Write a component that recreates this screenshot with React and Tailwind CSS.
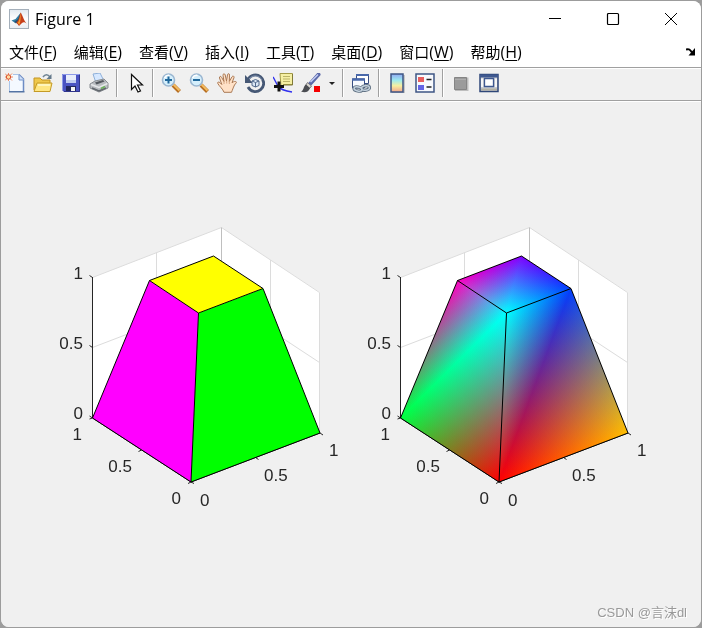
import React from "react";

const V = {
  1: [148, 268],
  2: [277, 219],
  4: [49.5, 204],
  5: [155.5, 99],
  6: [220, 74.5],
  7: [170.5, 42],
  8: [106.5, 66.5],
};

// hsv colormap with eight entries, one per vertex
const HSV = {
  1: "#ff0000",
  2: "#ffbf00",
  4: "#00ff40",
  5: "#00ffff",
  6: "#0040ff",
  7: "#8000ff",
  8: "#ff00bf",
};

const points = (ids) => ids.map((i) => V[i].join(",")).join(" ");

// foot of the perpendicular from p on the line a-b
function foot(p, a, b) {
  const dx = b[0] - a[0];
  const dy = b[1] - a[1];
  const t = ((p[0] - a[0]) * dx + (p[1] - a[1]) * dy) / (dx * dx + dy * dy);
  return [a[0] + t * dx, a[1] + t * dy];
}

// Linear colour interpolation across a triangle: three ramps added together
function ShadedTriangle({ ids }) {
  return (
    <g className="isolate">
      {ids.map((id, n) => {
        const a = V[ids[(n + 1) % 3]];
        const b = V[ids[(n + 2) % 3]];
        const f = foot(V[id], a, b);
        const gid = `ramp-${ids.join("-")}-${id}`;
        return (
          <g key={id} className="mix-blend-plus-lighter">
            <linearGradient id={gid} gradientUnits="userSpaceOnUse" x1={V[id][0]} y1={V[id][1]} x2={f[0]} y2={f[1]}>
              <stop offset="0" stopColor={HSV[id]} />
              <stop offset="1" stopColor="#000000" />
            </linearGradient>
            <polygon points={points(ids)} fill={`url(#${gid})`} shapeRendering="crispEdges" />
          </g>
        );
      })}
    </g>
  );
}

function FlatFaces() {
  return (
    <>
      <polygon points={points([1, 4, 8, 5])} fill="#ff00ff" />
      <polygon points={points([1, 2, 6, 5])} fill="#00ff00" />
      <polygon points={points([5, 6, 7, 8])} fill="#ffff00" />
    </>
  );
}

function ShadedFaces() {
  return (
    <>
      <ShadedTriangle ids={[1, 4, 5]} />
      <ShadedTriangle ids={[4, 5, 8]} />
      <ShadedTriangle ids={[1, 2, 6]} />
      <ShadedTriangle ids={[1, 6, 5]} />
      <ShadedTriangle ids={[5, 6, 7]} />
      <ShadedTriangle ids={[5, 7, 8]} />
    </>
  );
}

function Axes({ label, children }) {
  return (
    <svg role="img" aria-label={label} width="308" height="300" viewBox="0 0 308 300" className="shrink-0">
      <polygon points="49.5,63.5 178.5,13.5 178.5,154 49.5,204" fill="#fff" />
      <polygon points="178.5,13.5 277,78.5 277,219 178.5,154" fill="#fff" />
      <g stroke="#dcdcdc" fill="none">
        <path d="M49.5 63.5 178.5 13.5 276.5 78.5V219" />
        <path d="M113.5 38.5V179M227.5 46V186" />
        <path d="M49.5 133.5 178.5 84 276.5 148.5" />
        <path d="M178.5 13.5V154" stroke="#bfbfbf" />
      </g>
      <g stroke="#262626" fill="none">
        <path d="M49.5 63V204L148 268 277 219" />
        <path d="M49.5 63.5l-3-2M49.5 133.5l-3-2M49.5 204l-3-2" />
        <path d="M49.5 204l-3 1M98.5 236l-3 1.500M148 268l-3 1.500M148 268l3 1.500M212.500 243.500l3 2M277 219l3 2" />
      </g>
      {children}
      <g stroke="#000" strokeWidth="1" fill="none" strokeLinejoin="round">
        <path d={`M${V[4]}L${V[8]} ${V[5]} ${V[1]}ZM${V[1]}L${V[2]} ${V[6]} ${V[5]}M${V[6]}L${V[7]} ${V[8]}`} />
      </g>
      <g className="font-['Liberation_Sans',Arial,sans-serif] text-[17px]" fill="#262626">
        <g textAnchor="end">
          <text x="40" y="65">1</text>
          <text x="40" y="135">0.5</text>
          <text x="40" y="205">0</text>
          <text x="39" y="226">1</text>
          <text x="89" y="258">0.5</text>
          <text x="138" y="290">0</text>
        </g>
        <text x="157" y="292">0</text>
        <text x="221" y="267">0.5</text>
        <text x="286" y="242">1</text>
      </g>
    </svg>
  );
}

function Icon({ children }) {
  return (
    <svg width="20" height="20" viewBox="0 0 20 20" fill="none" aria-hidden="true">
      {children}
    </svg>
  );
}

const NewIcon = () => (
  <Icon>
    <path d="M4 2h10l5 5v12H4z" fill="#f4f9ff" />
    <path d="M4.500 8v10.500M8 1.500h6" stroke="#a9c4e8" />
    <path d="M14 1.500 18.500 6v12" stroke="#6d8cc4" strokeWidth="1.500" />
    <path d="M4 18.750h15.500" stroke="#5474a4" strokeWidth="1.500" />
    <path d="M14 2v5h5" fill="#cfe0f8" stroke="#7595cc" />
    <path d="M0 0.500l7 7M7 0.500l-7 7M3.500 0v8M0 4h8" stroke="#ef8a63" />
    <circle cx="3.500" cy="4" r="2.200" fill="#ffd9a0" stroke="#d9522c" />
  </Icon>
);

const OpenIcon = () => (
  <Icon>
    <path d="M1 17V5h6l2 2h8v4" fill="#efc84b" stroke="#c39422" />
    <path d="M1 18.500 4 10h15l-2 8.500z" fill="#ffe783" stroke="#c49a25" />
    <path d="M5 12h12" stroke="#fff6bd" strokeWidth="2" />
    <path d="M10 4c2-3 5-3 7 0" stroke="#6f8494" strokeWidth="1.500" />
    <path d="M18.500 1v5h-5z" fill="#64798b" />
  </Icon>
);

const SaveIcon = () => (
  <Icon>
    <path d="M1 1h18v18H3l-2-2z" fill="#4a53c2" />
    <path d="M1.500 17V1.500h17" stroke="#8d9ae8" />
    <path d="M18.500 2v16.500H3" stroke="#30358c" />
    <path d="M5 2h10v8H5z" fill="#e8edfb" />
    <path d="M5 7h10v3H5z" fill="#c2cdf0" />
    <path d="M5 13h10v5H5z" fill="#23275e" />
    <path d="M10 14h4v4h-4z" fill="#f5f5f5" />
  </Icon>
);

const PrintIcon = () => (
  <Icon>
    <path d="M4 1l7-1 4 8-8 2z" fill="#d6e8ff" stroke="#8fb0d9" />
    <path d="M1 11l5-3 9-2 4 4v5l-9 4-9-4z" fill="#b9bcc0" stroke="#888c91" />
    <path d="M2 11.500l8 3 8.500-4" stroke="#e6e8ea" strokeWidth="1.500" />
    <path d="M6 9.500l8-2.500 1.500 1.500-8 3z" fill="#53585e" />
    <path d="M3 15l7 3 7-3" stroke="#63686e" strokeWidth="1.500" />
    <path d="M12 15.500l4-2" stroke="#6db35b" strokeWidth="1.500" />
  </Icon>
);

const PointerIcon = () => (
  <Icon>
    <path d="M6.500 1.500v15l3.500-3.500 3 6 2.500-1-3-6h5z" fill="#fff" stroke="#111" strokeWidth="1.200" />
  </Icon>
);

const ZoomIcon = ({ plus }) => (
  <Icon>
    <path d="M12 12l6.500 6.500" stroke="#b86f22" strokeWidth="4" />
    <path d="M12.500 11.500l6 6" stroke="#f4bd62" strokeWidth="2" />
    <circle cx="7.500" cy="7" r="6" fill="#d5effc" stroke="#9bb7d1" strokeWidth="1.600" />
    <path d="M3.500 5c1-2 3-3 5-2.500" stroke="#fff" strokeWidth="1.500" />
    <path d={plus ? "M4 7h7M7.500 3.500v7" : "M4 7h7"} stroke="#20689c" strokeWidth="2" />
  </Icon>
);

const HandIcon = () => (
  <Icon>
    <path
      d="M7 19.300C6 16 2 13 .8 10.500c-.6-1.500 1-2 2-1l2 2L2.500 5c-.5-1.700 1.500-2.200 2-.8L7 8.500 6 2.300c-.2-1.800 1.800-2 2.200-.4L9.500 8l1-6.200c.3-1.700 2.200-1.400 2 .3L12.300 8.500 15 3.800c.8-1.400 2.500-.6 2 .9l-2 5c2-1.500 3.500-1.500 4.200-.9.800.8-.8 1.700-1.700 3.200-1.500 3-2 5-3 7.300z"
      fill="#ffe1c7"
      stroke="#a97854"
    />
    <path d="M7 8v3M9.700 8v2.500M12.300 8.500V11" stroke="#d7a783" />
  </Icon>
);

const RotateIcon = () => (
  <Icon>
    <path d="M3 6.500a8.300 8.300 0 1 1 0 7.500" stroke="#465875" strokeWidth="2.800" />
    <path d="M4 6a7.700 7.700 0 0 1 13 1" stroke="#8093b0" />
    <path d="M0 2v8h8z" fill="#465875" />
    <path d="M7 8l3.500-1.500L14 8v4.500L10.500 14 7 12.500z" fill="#dbe7f5" stroke="#52698b" />
    <path d="M7 8l3.500 1.500L14 8M10.500 9.500V14" stroke="#52698b" />
  </Icon>
);

const DataTipIcon = () => (
  <Icon>
    <path d="M0 4c2 3 3 6 5 9s7 5 14 6" stroke="#3030ef" strokeWidth="1.400" />
    <path d="M7 .5h12.500v11H11L8 14z" fill="#f5efa4" stroke="#a49b48" />
    <path d="M19.500 1v11H10" stroke="#817a38" />
    <path d="M10 3.500h7M10 6h7M10 8.500h7" stroke="#bbb369" />
    <path d="M1 13.500h10M6 8.500v10" stroke="#111" strokeWidth="3" />
  </Icon>
);

const BrushIcon = () => (
  <Icon>
    <path d="M9 11 17.500 1.500" stroke="#5c69a8" strokeWidth="4" strokeLinecap="round" />
    <path d="M9.500 9 17 1.500" stroke="#c4cdf4" strokeWidth="1.500" />
    <path d="M6.500 9.500l4 3.500-2 2.500-4-3z" fill="#d8d6cf" stroke="#77767a" />
    <path d="M5 11.500l4 3.500c-1 4-5 5-9 3.500 3-1 2-5 5-7z" fill="#4b4d52" />
    <path d="M13 13h6v6h-6z" fill="#f50000" />
  </Icon>
);

const LinkIcon = () => (
  <Icon>
    <path d="M5.500 1.500h12v9h-12z" fill="#fff" stroke="#384e82" />
    <path d="M5 2h13" stroke="#4968aa" strokeWidth="2" />
    <path d="M1.500 6h12v9h-12z" fill="#f7faff" stroke="#384e82" />
    <path d="M1 6.500h13" stroke="#4968aa" strokeWidth="2.500" />
    <g stroke="#5f7082" strokeWidth="3.200">
      <ellipse cx="7" cy="16" rx="4" ry="2" transform="rotate(12 7 16)" />
      <ellipse cx="14.500" cy="15" rx="4" ry="2.200" transform="rotate(-10 14.500 15)" />
    </g>
    <g stroke="#c3d1dd" strokeWidth="1.500">
      <ellipse cx="7" cy="16" rx="4" ry="2" transform="rotate(12 7 16)" />
      <ellipse cx="14.500" cy="15" rx="4" ry="2.200" transform="rotate(-10 14.500 15)" />
    </g>
  </Icon>
);

const ColorbarIcon = () => (
  <Icon>
    <linearGradient id="colorbar-fill" x1="0" y1="0" x2="0" y2="1">
      <stop offset="0" stopColor="#91a8f2" />
      <stop offset="0.350" stopColor="#9cebf0" />
      <stop offset="0.650" stopColor="#f6f0a0" />
      <stop offset="1" stopColor="#f2a58c" />
    </linearGradient>
    <path d="M5 20h12V2" stroke="#9b9b9b" />
    <rect x="4" y="1" width="12" height="18" fill="url(#colorbar-fill)" stroke="#3e5584" strokeWidth="1.500" />
  </Icon>
);

const LegendIcon = () => (
  <Icon>
    <rect x="1" y="1" width="18" height="18" fill="#f7f9fd" stroke="#3e5584" strokeWidth="1.500" />
    <path d="M3 4h6v5H3z" fill="#e85e5e" />
    <path d="M3 12h6v5H3z" fill="#6464e5" />
    <path d="M11.500 6.500h5M11.500 14h5" stroke="#222" strokeWidth="1.500" />
  </Icon>
);

const HideToolsIcon = () => (
  <Icon>
    <path d="M4 4.500h13.500V18H4z" fill="#bdbdbd" />
    <path d="M3.500 4.500h12v12h-12z" fill="#9b9b9b" stroke="#858585" />
    <path d="M4 6.500h11" stroke="#adadad" />
  </Icon>
);

const ShowToolsIcon = () => (
  <Icon>
    <rect x="1" y="1.500" width="18" height="17" fill="#c9ccd2" stroke="#2f4779" strokeWidth="1.500" />
    <path d="M1 3h18" stroke="#3e5890" strokeWidth="3" />
    <path d="M5.500 5.500h9v8h-9z" fill="#fff" stroke="#3e5890" strokeWidth="1.300" />
    <path d="M3 5.500v8.500M17 5.500v8.500" stroke="#f7f7f7" strokeWidth="2" />
    <path d="M2 16.500h16" stroke="#b3b1a3" strokeWidth="2" />
  </Icon>
);

function MatlabLogo() {
  return (
    <svg width="20" height="20" viewBox="0 0 20 20" aria-hidden="true">
      <linearGradient id="logo-bg" x1="0" y1="0" x2="0" y2="1">
        <stop offset="0" stopColor="#e0e8f0" />
        <stop offset="0.500" stopColor="#fff" />
        <stop offset="1" stopColor="#e8edf3" />
      </linearGradient>
      <rect x="0.500" y="0.500" width="19" height="19" fill="url(#logo-bg)" stroke="#a4afba" />
      <path d="M2.500 11.500l4-1.500 5-6-1.500 6-3 4.500z" fill="#327fa6" />
      <path d="M5 13l4-3 2.500-6L10 16c-1-1-2-2-5-3z" fill="#264f70" />
      <path d="M11.500 3.500c1.500 1 3 7.500 6 11-2-1.500-3-1.500-4.500-.5L10 17c-1-1-1.500-3-3-3 3-2 3.500-8 4.500-10.500z" fill="#c6401c" />
      <path d="M11.500 4c.5 4 0 8-1 12-1-1-1-1.500-2-2 2-2 2.500-6 3-10z" fill="#f49a2c" />
    </svg>
  );
}

const menus = [
  ["文件", "F"],
  ["编辑", "E"],
  ["查看", "V"],
  ["插入", "I"],
  ["工具", "T"],
  ["桌面", "D"],
  ["窗口", "W"],
  ["帮助", "H"],
];

function Tool({ label, children }) {
  return (
    <button type="button" aria-label={label} className="flex h-7 w-7 shrink-0 items-center justify-center">
      {children}
    </button>
  );
}

function Separator() {
  return (
    <div className="flex w-2 shrink-0 justify-center">
      <div className="h-7 w-0.5 border-r border-l border-r-white border-l-[#a0a0a0]" />
    </div>
  );
}

function WindowButton({ label, children }) {
  return (
    <button type="button" aria-label={label} className="flex h-9 w-[58px] items-center justify-center">
      <svg width="14" height="14" viewBox="0 0 14 14" fill="none" stroke="#000" aria-hidden="true">
        {children}
      </svg>
    </button>
  );
}

export default function App() {
  return (
    <div className="flex min-h-screen bg-[#9c9c9c] p-px font-['Open_Sans','Noto_Sans_CJK_SC',sans-serif] text-black">
      <div className="relative flex flex-1 flex-col overflow-hidden rounded-lg bg-[#f0f0f0]">
        <header className="flex h-9 items-center justify-between bg-white pr-px">
          <div className="flex items-center gap-1.5 pl-2">
            <MatlabLogo />
            <h1 className="text-base leading-5">Figure 1</h1>
          </div>
          <div className="flex">
            <WindowButton label="Minimize">
              <path d="M1 6.500h12" />
            </WindowButton>
            <WindowButton label="Maximize">
              <rect x="1.500" y="1.500" width="11" height="11" rx="1" strokeWidth="1.200" />
            </WindowButton>
            <WindowButton label="Close">
              <path d="M1 1l12 12M13 1 1 13" />
            </WindowButton>
          </div>
        </header>

        <nav className="flex h-[31px] items-center justify-between border-b border-[#a0a0a0] bg-white pr-1 pl-2">
          <div className="flex gap-[17px]">
            {menus.map(([name, key]) => (
              <button key={key} type="button" className="flex items-baseline text-[15px] leading-5 whitespace-nowrap">
                {name}
                <span className="text-base leading-5">
                  (<span className="underline underline-offset-2">{key}</span>)
                </span>
              </button>
            ))}
          </div>
          <button type="button" aria-label="Dock figure" className="flex h-5 w-3 items-center justify-center">
            <svg width="10" height="8" viewBox="0 0 10 8" fill="none" aria-hidden="true">
              <path d="M0 1.500c3-1 4 0 6 3" stroke="#000" strokeWidth="2" />
              <path d="M9 0v7.500H2.500z" fill="#000" />
            </svg>
          </button>
        </nav>

        <div role="toolbar" aria-label="Figure toolbar" className="flex h-[33px] items-center border-t border-b border-t-white border-b-[#a0a0a0] bg-[#f0f0f0] pb-[3px]">
          <Tool label="New figure"><NewIcon /></Tool>
          <Tool label="Open file"><OpenIcon /></Tool>
          <Tool label="Save figure"><SaveIcon /></Tool>
          <Tool label="Print figure"><PrintIcon /></Tool>
          <Separator />
          <Tool label="Edit plot"><PointerIcon /></Tool>
          <Separator />
          <Tool label="Zoom in"><ZoomIcon plus /></Tool>
          <Tool label="Zoom out"><ZoomIcon /></Tool>
          <Tool label="Pan"><HandIcon /></Tool>
          <Tool label="Rotate 3D"><RotateIcon /></Tool>
          <Tool label="Data cursor"><DataTipIcon /></Tool>
          <Tool label="Brush data"><BrushIcon /></Tool>
          <button type="button" aria-label="Brush colour" className="flex h-7 w-3.5 shrink-0 items-center justify-center">
            <svg width="6" height="3" viewBox="0 0 6 3" aria-hidden="true">
              <path d="M0 0h6L3 3z" fill="#222" />
            </svg>
          </button>
          <Separator />
          <Tool label="Link plot"><LinkIcon /></Tool>
          <Separator />
          <Tool label="Insert colorbar"><ColorbarIcon /></Tool>
          <Tool label="Insert legend"><LegendIcon /></Tool>
          <Separator />
          <Tool label="Hide plot tools"><HideToolsIcon /></Tool>
          <Tool label="Show plot tools"><ShowToolsIcon /></Tool>
        </div>

        <main className="flex flex-1 items-center justify-center border-t border-white bg-[#f0f0f0] pb-0.5">
          <Axes label="Frustum with flat face colours">
            <FlatFaces />
          </Axes>
          <Axes label="Frustum with interpolated face colours">
            <ShadedFaces />
          </Axes>
        </main>

        <p className="absolute right-3.5 bottom-1 font-['Liberation_Sans','Noto_Sans_CJK_SC',sans-serif] text-[13px] leading-5 text-[#999] [text-shadow:1px_1px_0_#fff]">
          CSDN @言沫dl
        </p>
      </div>
    </div>
  );
}
